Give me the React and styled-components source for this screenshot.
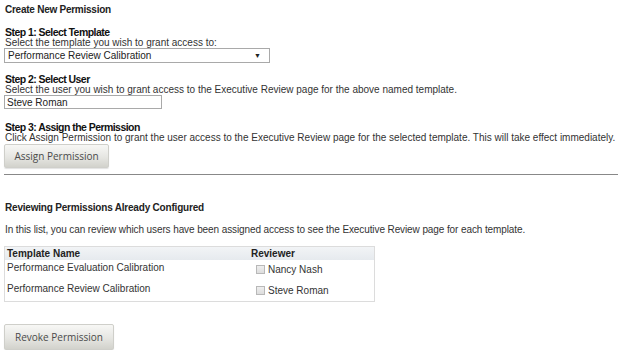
import React from "react";
import styled, { createGlobalStyle } from "styled-components";

const Global = createGlobalStyle`
  html, body { margin: 0; padding: 0; background: #fff; }
  body { font-family: "Liberation Sans", Arial, sans-serif; font-size: 10px; color: #222; }
`;

const Page = styled.div`
  padding: 3px 4px 0 4px;
  width: 618px;
  box-sizing: border-box;
`;

const Title = styled.div`
  font-weight: bold;
  font-size: 10px;
  line-height: 13px;
  letter-spacing: -0.25px;
  margin-left: 1px;
  color: #222;
`;

const Step = styled.div`
  margin-top: ${(p) => p.$mt}px;
`;

const StepHead = styled.div`
  font-weight: bold;
  font-size: 10.5px;
  line-height: 12px;
  letter-spacing: -0.55px;
  margin-left: 1px;
  color: #111;
`;

const StepText = styled.div`
  font-size: 10px;
  line-height: 10px;
  margin-left: 1px;
  color: #333;
  white-space: nowrap;
`;

const SelectBox = styled.div`
  width: 266px;
  height: 15px;
  box-sizing: border-box;
  border: 1px solid #a9a9a9;
  display: flex;
  align-items: center;
  justify-content: space-between;
  padding: 0 8px 0 3px;
  font-size: 10px;
  color: #222;
`;

const Arrow = styled.span`
  font-size: 7px;
  color: #222;
`;

const TextBox = styled.div`
  width: 158px;
  height: 14px;
  box-sizing: border-box;
  border: 1px solid #a9a9a9;
  display: flex;
  align-items: center;
  padding-left: 2px;
  font-size: 10px;
  color: #222;
`;

const Button = styled.div`
  display: inline-flex;
  align-items: center;
  justify-content: center;
  height: ${(p) => p.$h}px;
  width: ${(p) => p.$w}px;
  box-sizing: border-box;
  border: 1px solid #cfcfca;
  border-radius: 2px;
  background: linear-gradient(#f7f7f5, #e6e6e2 55%, #d2d2cc);
  box-shadow: 0 1px 1px rgba(0,0,0,0.12);
  font-family: "Open Sans", "Liberation Sans", sans-serif;
  font-size: 10px;
  color: #4a4a4a;
`;

const ButtonRow = styled.div`
  margin-top: 1px;
`;

const Rule = styled.hr`
  border: none;
  border-top: 1px solid #888;
  margin: 6px 0 0 0;
  width: 614px;
`;

const SectionTitle = styled.div`
  font-weight: bold;
  font-size: 10px;
  line-height: 13px;
  letter-spacing: -0.2px;
  margin: 26px 0 0 1px;
  color: #222;
`;

const Intro = styled.div`
  font-size: 10px;
  line-height: 13px;
  letter-spacing: -0.1px;
  margin: 9px 0 0 1px;
  color: #333;
`;

const Table = styled.div`
  margin-top: 10px;
  width: 371px;
  box-sizing: border-box;
  border: 1px solid #dcdcdc;
  display: grid;
  grid-template-columns: 244px 1fr;
`;

const HeadCell = styled.div`
  background: linear-gradient(#f2f4f6, #e6eaee);
  font-weight: bold;
  font-size: 10px;
  height: 13px;
  line-height: 13px;
  padding-left: 2px;
  color: #222;
`;

const Cell = styled.div`
  font-size: 10px;
  line-height: 12px;
  height: ${(p) => p.$h}px;
  padding-left: ${(p) => p.$pl}px;
  padding-top: ${(p) => p.$pt}px;
  display: flex;
  align-items: flex-start;
  color: #333;
  box-sizing: border-box;
`;

const Check = styled.span`
  display: inline-block;
  width: 9px;
  height: 9px;
  box-sizing: border-box;
  border: 1px solid #b8b8b8;
  background: linear-gradient(#eee, #ddd);
  margin: 1px 3px 0 0;
`;

const BottomArea = styled.div`
  margin-top: 22px;
`;

export default function App() {
  return (
    <>
      <Global />
      <Page>
        <Title>Create New Permission</Title>
        <Step $mt={10}>
          <StepHead>Step 1: Select Template</StepHead>
          <StepText>Select the template you wish to grant access to:</StepText>
          <SelectBox>
            <span>Performance Review Calibration</span>
            <Arrow>▼</Arrow>
          </SelectBox>
        </Step>
        <Step $mt={10}>
          <StepHead>Step 2: Select User</StepHead>
          <StepText>Select the user you wish to grant access to the Executive Review page for the above named template.</StepText>
          <TextBox>Steve Roman</TextBox>
        </Step>
        <Step $mt={12}>
          <StepHead>Step 3: Assign the Permission</StepHead>
          <StepText>Click Assign Permission to grant the user access to the Executive Review page for the selected template. This will take effect immediately.</StepText>
          <ButtonRow>
            <Button $w={105} $h={24}>Assign Permission</Button>
          </ButtonRow>
        </Step>
        <Rule />
        <SectionTitle>Reviewing Permissions Already Configured</SectionTitle>
        <Intro>In this list, you can review which users have been assigned access to see the Executive Review page for each template.</Intro>
        <Table>
          <HeadCell>Template Name</HeadCell>
          <HeadCell>Reviewer</HeadCell>
          <Cell $h={21} $pl={2} $pt={2}>Performance Evaluation Calibration</Cell>
          <Cell $h={21} $pl={7} $pt={4}><Check />Nancy Nash</Cell>
          <Cell $h={20} $pl={2} $pt={2}>Performance Review Calibration</Cell>
          <Cell $h={20} $pl={7} $pt={4}><Check />Steve Roman</Cell>
        </Table>
        <BottomArea>
          <Button $w={110} $h={26}>Revoke Permission</Button>
        </BottomArea>
      </Page>
    </>
  );
}
